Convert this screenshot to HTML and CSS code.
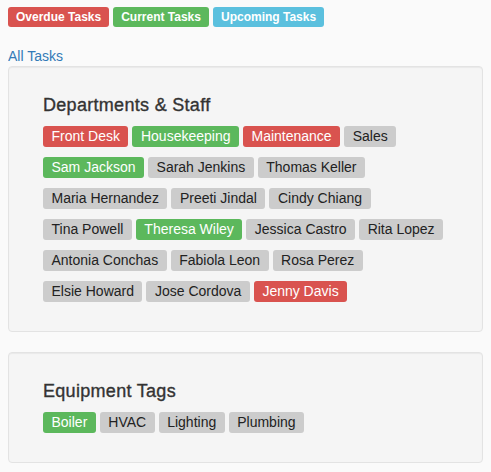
FILE: index.html
```html
<!DOCTYPE html>
<html>
<head>
<meta charset="utf-8">
<link rel="stylesheet" href="styles.css">
</head>
<body>
<div class="status-row">
  <span class="label label-danger">Overdue Tasks</span>
  <span class="label label-success">Current Tasks</span>
  <span class="label label-info">Upcoming Tasks</span>
</div>
<a class="all-link" href="#">All Tasks</a>
<div class="well">
  <div class="inner">
    <h4 class="title">Departments &amp; Staff</h4>
    <div class="tags">
      <span class="tag red">Front Desk</span>
      <span class="tag green">Housekeeping</span>
      <span class="tag red">Maintenance</span>
      <span class="tag">Sales</span>
      <span class="tag green">Sam Jackson</span>
      <span class="tag">Sarah Jenkins</span>
      <span class="tag">Thomas Keller</span>
      <span class="tag">Maria Hernandez</span>
      <span class="tag">Preeti Jindal</span>
      <span class="tag">Cindy Chiang</span>
      <span class="tag">Tina Powell</span>
      <span class="tag green">Theresa Wiley</span>
      <span class="tag">Jessica Castro</span>
      <span class="tag">Rita Lopez</span>
      <span class="tag">Antonia Conchas</span>
      <span class="tag">Fabiola Leon</span>
      <span class="tag">Rosa Perez</span>
      <span class="tag">Elsie Howard</span>
      <span class="tag">Jose Cordova</span>
      <span class="tag red">Jenny Davis</span>
    </div>
  </div>
</div>
<div class="well">
  <div class="inner">
    <h4 class="title">Equipment Tags</h4>
    <div class="tags">
      <span class="tag green">Boiler</span>
      <span class="tag">HVAC</span>
      <span class="tag">Lighting</span>
      <span class="tag">Plumbing</span>
    </div>
  </div>
</div>
</body>
</html>
```
FILE: styles.css
```css
html, body {
  background: #fafafa;
}
body {
  margin: 7px 8px 8px;
  font-family: "Liberation Sans", Arial, sans-serif;
  font-size: 14px;
  line-height: 20px;
  color: #333;
}
.status-row {
  display: flex;
  gap: 4px;
  height: 20px;
}
.label {
  display: inline-block;
  height: 20px;
  line-height: 20px;
  padding: 0 8px;
  font-size: 12px;
  font-weight: bold;
  color: #fff;
  border-radius: 3px;
}
.label-danger { background: #d9534f; }
.label-success { background: #5cb85c; }
.label-info { background: #5bc0de; }
.all-link {
  display: block;
  margin-top: 19px;
  color: #337ab7;
  text-decoration: none;
  line-height: 20px;
}
.well {
  background: #f5f5f5;
  border: 1px solid #e3e3e3;
  border-radius: 4px;
  box-shadow: inset 0 1px 1px rgba(0,0,0,.05);
  padding: 19px;
  margin-bottom: 20px;
}
.inner {
  padding: 0 15px;
}
.title {
  margin: 10px 0;
  font-size: 18px;
  line-height: 19.8px;
  font-weight: normal;
  letter-spacing: 0.3px;
  -webkit-text-stroke: 0.35px #333;
  color: #333;
}
.tags {
  display: flex;
  flex-wrap: wrap;
  gap: 10px 4px;
  padding-bottom: 10px;
}
.tag {
  display: inline-block;
  height: 21px;
  line-height: 21px;
  padding: 0 8.5px;
  border-radius: 3px;
  background: #cccccc;
  color: #222;
  font-size: 14px;
}
.tag.red { background: #d9534f; color: #fff; }
.tag.green { background: #5cb85c; color: #fff; }
```
